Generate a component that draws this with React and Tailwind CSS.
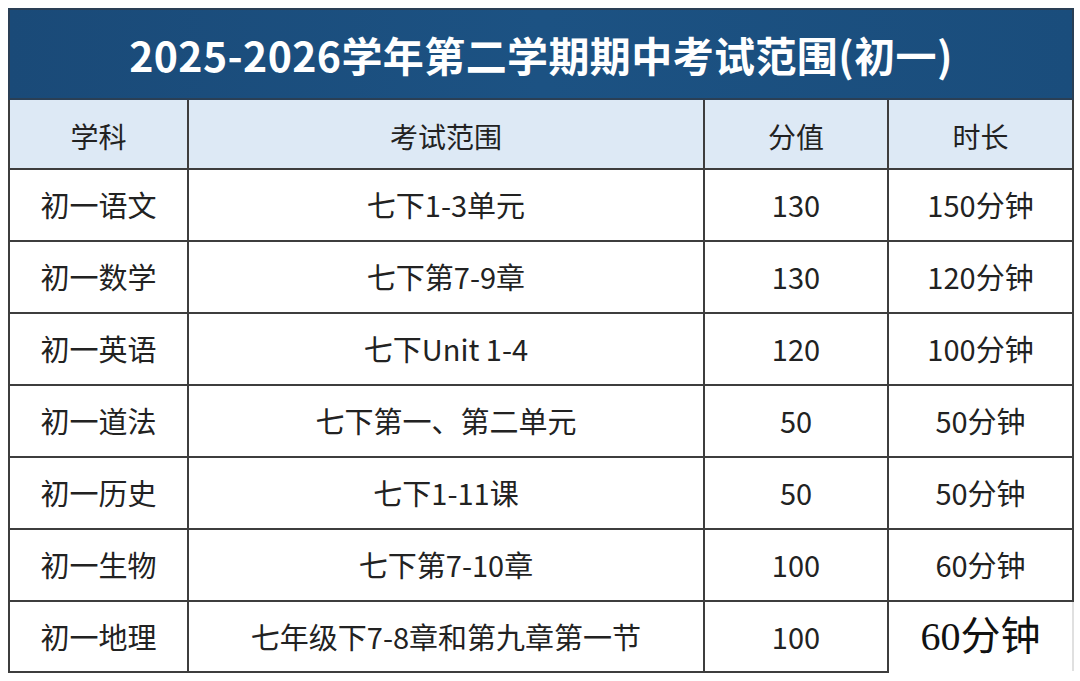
const rows = [
  ['初一语文', '七下1-3单元', '130', '150分钟'],
  ['初一数学', '七下第7-9章', '130', '120分钟'],
  ['初一英语', '七下Unit 1-4', '120', '100分钟'],
  ['初一道法', '七下第一、第二单元', '50', '50分钟'],
  ['初一历史', '七下1-11课', '50', '50分钟'],
  ['初一生物', '七下第7-10章', '100', '60分钟'],
  ['初一地理', '七年级下7-8章和第九章第一节', '100', '60分钟'],
];

const cell = 'border-2 border-[#3d3d3d] text-center align-middle p-0';

export default function App() {
  return (
    <div className="w-[1080px] h-[681px] bg-white pt-[8px] pl-[8px] overflow-hidden"
         style={{ fontFamily: '"Noto Sans CJK SC", "Noto Sans", sans-serif' }}>
      <table className="border-collapse table-fixed w-[1064px] text-[#222] text-[29px]">
        <colgroup>
          <col className="w-[179px]" />
          <col className="w-[516px]" />
          <col className="w-[184px]" />
          <col className="w-[185px]" />
        </colgroup>
        <thead>
          <tr className="h-[90px]">
            <th colSpan={4}
                className="border-2 border-[#2a3f55] bg-gradient-to-r from-[#1a4a78] via-[#1c5283] to-[#1a4d7c] text-white text-[41px] font-bold tracking-[0.4px] text-center align-middle p-0">
              <span className="relative top-[1px]">2025-2026学年第二学期期中考试范围(初一)</span>
            </th>
          </tr>
          <tr className="h-[70px] bg-[#dde9f5]">
            {['学科', '考试范围', '分值', '时长'].map(h => (
              <th key={h} className={`${cell} font-normal text-[28px]`}>
                <span className="relative top-[2px]">{h}</span>
              </th>
            ))}
          </tr>
        </thead>
        <tbody>
          {rows.map((r, i) => {
            const last = i === rows.length - 1;
            return (
              <tr key={r[0]} className={last ? 'h-[71px]' : 'h-[72px]'}>
                <td className={cell}>{r[0]}</td>
                <td className={cell}>{r[1]}</td>
                <td className={cell}>{r[2]}</td>
                {last ? (
                  <td className="border-2 border-t-[#3d3d3d] border-l-[#b5b5b5] border-r-[#e0e0e0] border-b-white text-center align-middle p-0 text-[40px] text-[#111]"
                      style={{ fontFamily: '"Liberation Serif", "Noto Sans CJK SC", serif' }}>
                    {r[3]}
                  </td>
                ) : (
                  <td className={cell}>{r[3]}</td>
                )}
              </tr>
            );
          })}
        </tbody>
      </table>
    </div>
  );
}
